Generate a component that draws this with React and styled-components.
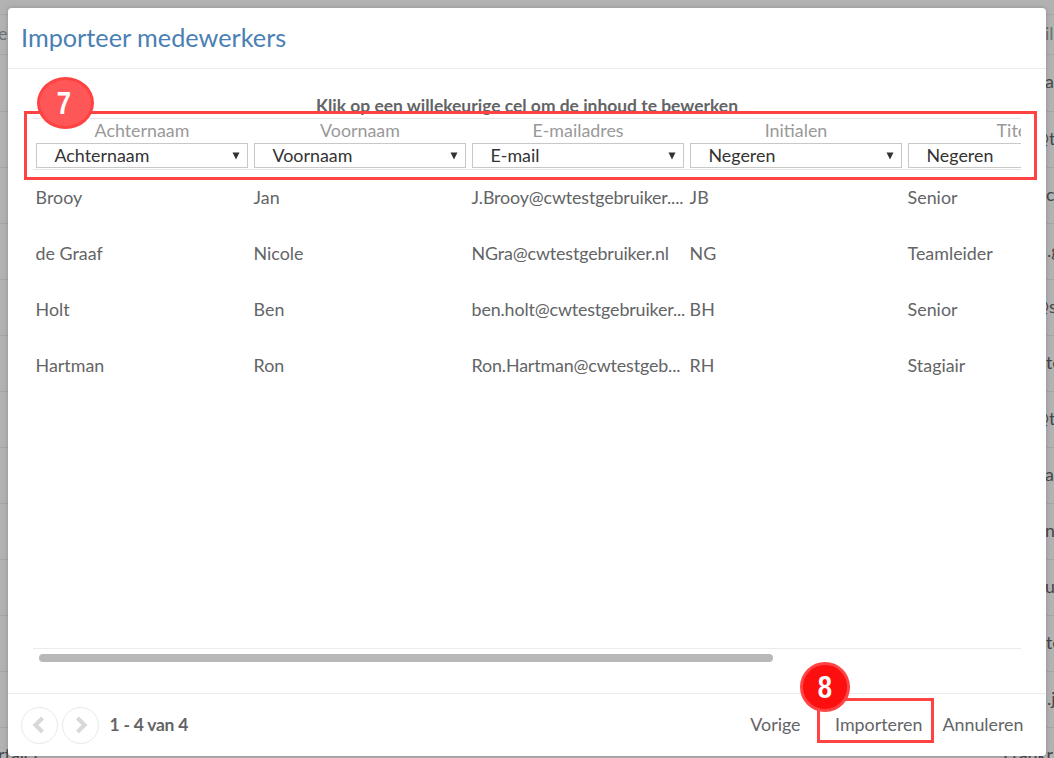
import React from "react";
import styled, { createGlobalStyle } from "styled-components";

const GlobalStyle = createGlobalStyle`
  * { box-sizing: border-box; }
  body { margin: 0; background: #b2b2b2; overflow: hidden; font: 17.85px/24px Lato, sans-serif; color: #636466; }
`;

const Page = styled.div`
  position: relative;
  width: 1054px;
  height: 758px;
  overflow: hidden;
`;

const Backdrop = styled.div`
  display: flex;
  flex-direction: column;
  padding-top: 14px;
  height: 758px;
  color: #46474a;
`;

const BackRow = styled.div`
  flex: none;
  display: flex;
  justify-content: space-between;
  align-items: center;
  height: ${(p) => p.$height || 56}px;
  padding-bottom: 4px;
  border-top: 1px solid #a6a6a6;
  color: ${(p) => (p.$head ? "#707070" : "inherit")};
  white-space: nowrap;
`;

const BackLeft = styled.span`
  margin-left: ${(p) => p.$shift || 0}px;
`;

const BackRight = styled.span`
  width: ${(p) => p.$width || 8}px;
`;

const Modal = styled.section`
  position: absolute;
  left: 8px;
  top: 8px;
  width: 1038px;
  height: 748px;
  display: flex;
  flex-direction: column;
  background: #fff;
  border-radius: 4px;
  box-shadow: 0 0 5px rgba(0, 0, 0, 0.2);
`;

const Header = styled.header`
  height: 61px;
  padding: 13px 13px 0;
  border-bottom: 1px solid #ebebeb;
`;

const Title = styled.h1`
  margin: 0;
  font-size: 25.25px;
  line-height: 32px;
  font-weight: 400;
  color: #4a7fb5;
`;

const Body = styled.main`
  flex: 1;
  display: flex;
  flex-direction: column;
  padding: 25px 25px 0;
`;

const Hint = styled.p`
  margin: 0;
  height: 24px;
  text-align: center;
  font-size: 17.45px;
  font-weight: 700;
`;

const TableView = styled.div`
  height: 531px;
  overflow: hidden;
  border-top: 1px solid #e6e6e6;
  border-bottom: 1px solid #ebebeb;
`;

const Grid = styled.div`
  display: grid;
  grid-template-columns: repeat(5, 218px);
`;

const HeadCell = styled.div`
  height: 51px;
  padding: 0 3px;
  border-bottom: 1px solid #e6e6e6;
  text-align: center;
  color: #999;
`;

const HeadLabel = styled.div`
  height: 24px;
  line-height: 22px;
`;

const Select = styled.div`
  display: flex;
  justify-content: space-between;
  align-items: center;
  height: 25px;
  padding: 0 7.5px 0 17.5px;
  border: 1px solid #c8c8c8;
  line-height: 20px;
  color: #333;
`;

const SelectValue = styled.span`
  padding-bottom: 2px;
`;

const Arrow = styled.svg`
  width: 8px;
  height: 8px;
  fill: #333;
`;

const Cell = styled.div`
  height: 56px;
  padding: 15px 0 0 2.6px;
  white-space: nowrap;
  letter-spacing: ${(p) => (p.$tight ? "-0.14px" : "normal")};
`;

const Thumb = styled.div`
  width: 734px;
  height: 8px;
  margin: 5px 0 0 6px;
  border-radius: 4px;
  background: #b8b8b8;
`;

const Footer = styled.footer`
  display: flex;
  align-items: center;
  height: 63px;
  padding: 0 22.5px 0 13px;
  border-top: 1px solid #ebebeb;
`;

const PageButton = styled.button`
  display: grid;
  place-items: center;
  width: 37px;
  height: 37px;
  padding: 0;
  margin-right: 4px;
  border: 1px solid #e9e9e9;
  border-radius: 50%;
  background: #fff;
`;

const Chevron = styled.svg`
  width: 14px;
  height: 18px;
  margin-right: ${(p) => p.$nudge || 0}px;
  fill: none;
  stroke: #d8d8d8;
  stroke-width: 4;
`;

const Count = styled.strong`
  margin-left: 6.5px;
  font-size: 17.45px;
  letter-spacing: -0.22px;
`;

const Actions = styled.div`
  display: flex;
  margin-left: auto;
  padding-bottom: 2px;
`;

const Action = styled.span`
  margin-left: ${(p) => p.$gap || 0}px;
`;

const Outline = styled.div`
  position: absolute;
  left: ${(p) => p.$x}px;
  top: ${(p) => p.$y}px;
  width: ${(p) => p.$w}px;
  height: ${(p) => p.$h}px;
  border: 3px solid #ff4343;
`;

const Badge = styled.div`
  position: absolute;
  left: ${(p) => p.$x}px;
  top: ${(p) => p.$y}px;
  width: ${(p) => p.$w}px;
  height: ${(p) => p.$h}px;
  display: grid;
  place-items: center;
  padding-right: ${(p) => p.$inset || 0}px;
  border: 3px solid #ff4343;
  border-radius: 50%;
  background: ${(p) => p.$fill};
  color: #fff;
  font: 700 32px/32px "Liberation Sans", sans-serif;
`;

const Digit = styled.span`
  transform: scaleX(0.8);
`;

const columns = [
  ["Achternaam", "Achternaam"],
  ["Voornaam", "Voornaam"],
  ["E-mailadres", "E-mail"],
  ["Initialen", "Negeren"],
  ["Titel", "Negeren"],
];

const people = [
  ["Brooy", "Jan", "J.Brooy@cwtestgebruiker....", "JB", "Senior"],
  ["de Graaf", "Nicole", "NGra@cwtestgebruiker.nl", "NG", "Teamleider"],
  ["Holt", "Ben", "ben.holt@cwtestgebruiker...", "BH", "Senior"],
  ["Hartman", "Ron", "Ron.Hartman@cwtestgeb...", "RH", "Stagiair"],
];

const backTexts = [
  ["a", 9], ["@t", 20], ["c", 8], ["n.g", 17], ["@s", 20], ["te", 8],
  ["@t", 20], ["a.", 9], ["n", 9], ["u", 9], ["te", 8], ["n.j", 17],
];

export default function App() {
  return (
    <Page>
      <GlobalStyle />
      <Backdrop>
        <BackRow $height={40} $head>
          <BackLeft $shift={-2}>e</BackLeft>
          <BackRight $width={9}>il</BackRight>
        </BackRow>
        <BackRow $height={57}>
          <span />
          <BackRight $width={backTexts[0][1]}>{backTexts[0][0]}</BackRight>
        </BackRow>
        {backTexts.slice(1).map(([text, width], i) => (
          <BackRow key={i}>
            <span />
            <BackRight $width={width}>{text}</BackRight>
          </BackRow>
        ))}
        <BackRow>
          <BackLeft $shift={-2}>rtaler</BackLeft>
          <BackRight $width={51}>Frankrijk</BackRight>
        </BackRow>
      </Backdrop>

      <Modal>
        <Header>
          <Title>Importeer medewerkers</Title>
        </Header>
        <Body>
          <Hint>Klik op een willekeurige cel om de inhoud te bewerken</Hint>
          <TableView>
            <Grid>
              {columns.map(([name, value], i) => (
                <HeadCell key={i}>
                  <HeadLabel>{name}</HeadLabel>
                  <Select>
                    <SelectValue>{value}</SelectValue>
                    <Arrow viewBox="0 0 8 8">
                      <path d="M0.5 0.5h7L4 7.5z" />
                    </Arrow>
                  </Select>
                </HeadCell>
              ))}
              {people.flat().map((text, i) => (
                <Cell key={i} $tight={text.includes("@")}>{text}</Cell>
              ))}
            </Grid>
          </TableView>
          <Thumb />
        </Body>
        <Footer>
          <PageButton aria-label="Vorige pagina">
            <Chevron $nudge={2} viewBox="0 0 14 18"><path d="M10.5 2L3.5 9l7 7" /></Chevron>
          </PageButton>
          <PageButton aria-label="Volgende pagina">
            <Chevron viewBox="0 0 14 18"><path d="M3.5 2l7 7-7 7" /></Chevron>
          </PageButton>
          <Count>1 - 4 van 4</Count>
          <Actions>
            <Action>Vorige</Action>
            <Action $gap={34.5}>Importeren</Action>
            <Action $gap={20}>Annuleren</Action>
          </Actions>
        </Footer>
      </Modal>

      <Outline $x={24} $y={111} $w={1013} $h={69} />
      <Outline $x={817} $y={698} $w={117} $h={45} />
      <Badge $x={37} $y={77} $w={57} $h={52} $inset={4} $fill="#ff5757"><Digit>7</Digit></Badge>
      <Badge $x={800} $y={662} $w={50} $h={50} $inset={1} $fill="#fd0f0f"><Digit>8</Digit></Badge>
    </Page>
  );
}
